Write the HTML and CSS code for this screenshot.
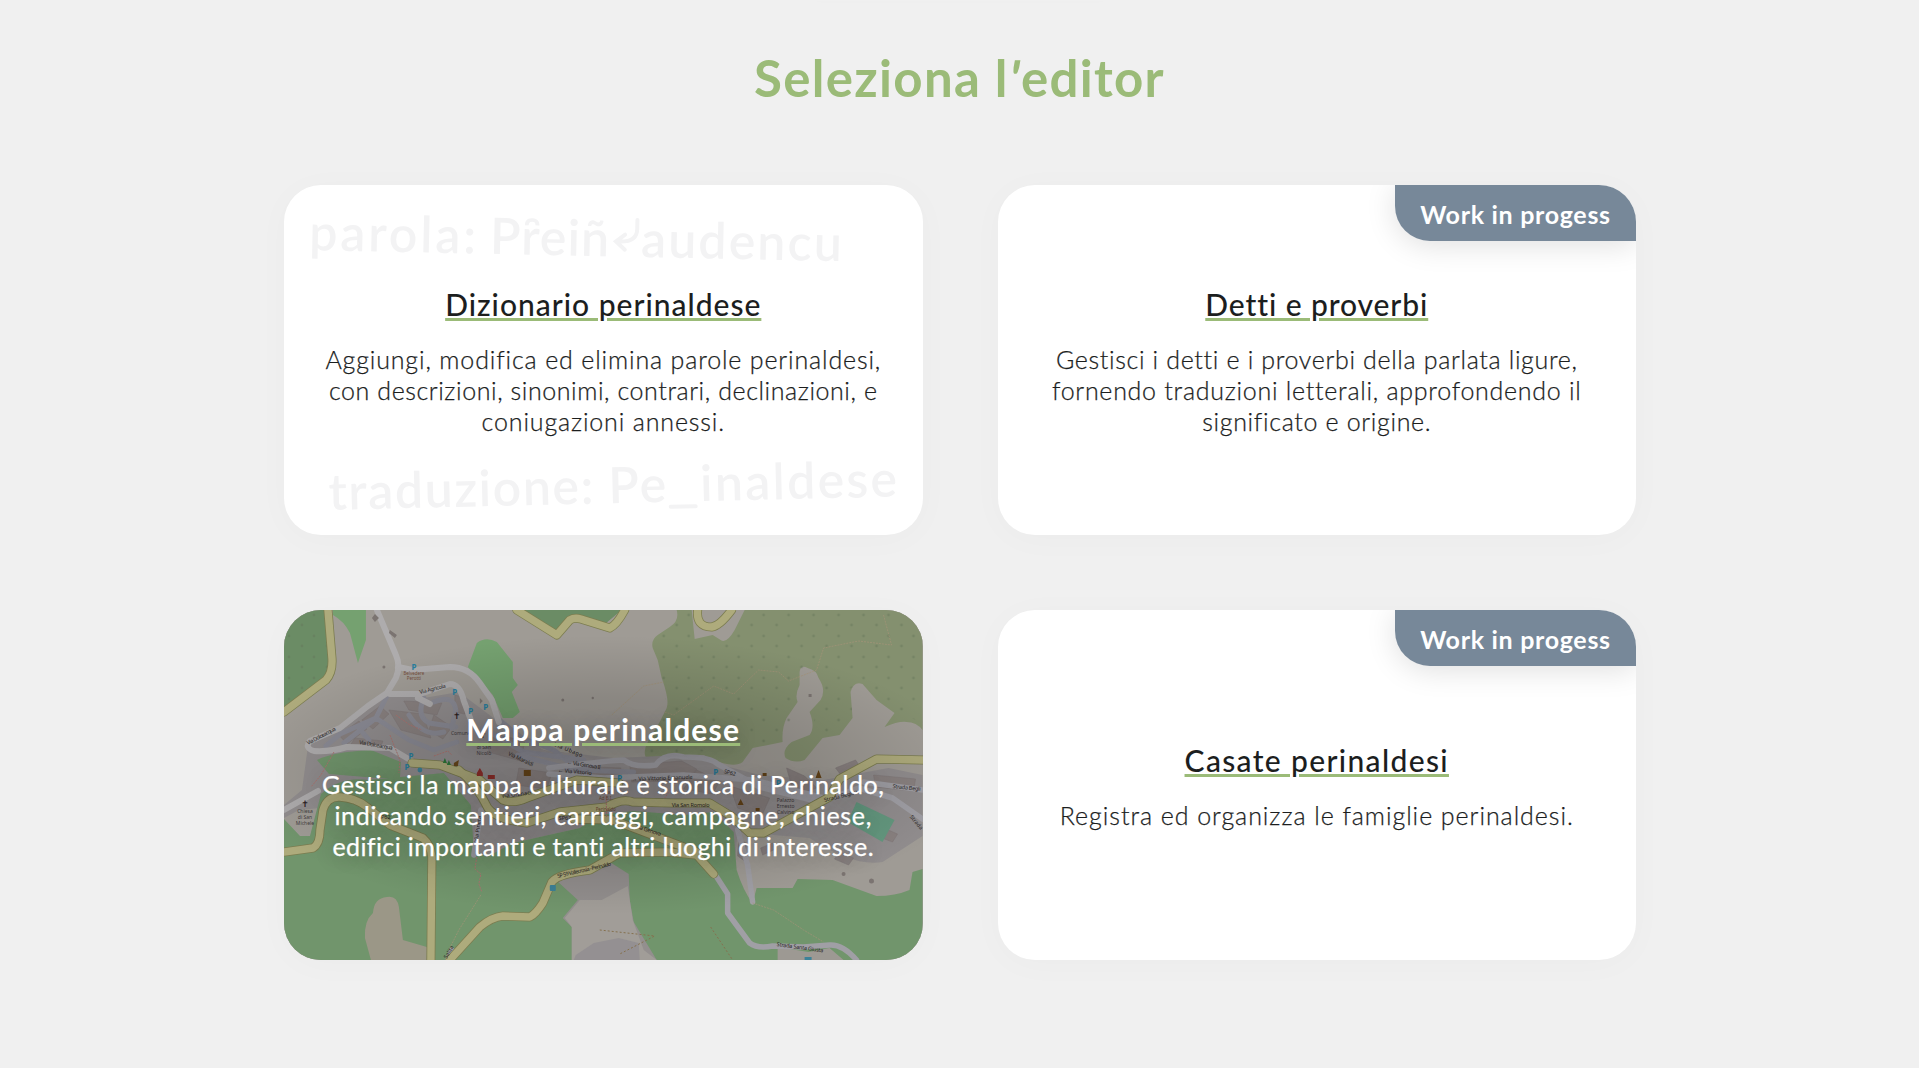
FILE: index.html
```html
<!DOCTYPE html>
<html lang="it">
<head>
<meta charset="utf-8">
<title>Seleziona l'editor</title>
<link rel="stylesheet" href="styles.css">
</head>
<body>
<main class="page">
  <div class="top-edge"></div>
  <h1 class="title">Seleziona l<span class="apostrophe">'</span>editor</h1>
  <section class="grid">
    <a class="card">
      <svg class="backdrop" viewBox="0 0 639 350" aria-hidden="true">
        <g class="ghost" transform="rotate(1.2 27 65)">
          <text x="25" y="65" textLength="167">parola:</text>
          <text x="206" y="65" textLength="119">Pȓeiñ</text>
          <path d="M353 28v9q0 13-17 13M341 43l-9 7 9 8"/>
          <text x="357" y="65" textLength="201">audencu</text>
        </g>
        <g class="ghost" transform="rotate(-1.35 45 324)">
          <text x="45" y="325" textLength="265">traduzione:</text>
          <text x="325" y="325" textLength="58">Pe</text>
          <path class="blank" d="M387 330H412"/>
          <text x="417" y="325" textLength="197">inaldese</text>
        </g>
      </svg>
      <h2 class="name t-diz">Dizionario perinaldese</h2>
      <p class="desc"><span class="w85">Aggiungi, modifica ed elimina parole perinaldesi,</span><span class="w57">con descrizioni, sinonimi, contrari, declinazioni, e</span><span class="w85">coniugazioni annessi.</span></p>
    </a>
    <a class="card">
      <span class="badge">Work in progess</span>
      <h2 class="name t-det">Detti e proverbi</h2>
      <p class="desc"><span class="w66">Gestisci i detti e i proverbi della parlata ligure,</span><span class="w73">fornendo traduzioni letterali, approfondendo il</span><span class="w66">significato e origine.</span></p>
    </a>
    <a class="card map">
      <svg class="backdrop" viewBox="0 0 639 350" preserveAspectRatio="none" aria-hidden="true">
        <defs>
          <pattern id="trees" width="25" height="21" patternUnits="userSpaceOnUse"><circle cx="5" cy="5" r="1.4"/><circle cx="18" cy="15" r="1.4"/></pattern>
          <radialGradient id="shade"><stop offset="0" stop-opacity=".2"/><stop offset=".55" stop-opacity=".13"/><stop offset="1" stop-opacity="0"/></radialGradient>
        </defs>
        <rect width="639" height="350" fill="#9f9b95"/>
        <!-- woods -->
        <path fill="#6b8c65" d="M0 0H42L46 45 45 68 0 102Z"/>
        <path fill="#6b8c65" d="M240 0L273 24 291 7 320 15 338 0Z"/>
        <path fill="#84906f" d="M393 0Q396 11 386 17L374 25Q367 30 369 38L374 50 378 68Q386 90 383 98L376 112 364 132Q357 145 366 152 378 151 389 145H420Q449 160 459 152L469 138 499 132Q498 118 503 108L514 92Q511 85 516 75L516 62Q517 54 524 58 533 60 535 68 543 80 537 90L526 102Q532 117 526 125L508 132Q498 140 502 148 511 154 521 150L539 128 556 125 569 108 567 82Q570 71 579 74L593 90 611 103 601 117Q615 111 623 112 633 112 639 120V0H461L451 20Q443 34 437 30L429 25 411 29 408 0Z"/>
        <path fill="url(#trees)" class="dots" d="M0 0H42L46 45 45 68 0 102ZM393 0L369 38 378 68 383 98 361 145 469 138 499 132 514 92 516 58 535 68 537 90 526 125 556 125 569 108 567 78 579 74 611 103 639 112V0H461L441 32 409 27 408 0Z"/>
        <!-- meadows -->
        <g fill="#75a170">
          <path d="M49 0H82V30L74 53 66 23Q60 11 49 5Z"/>
          <path d="M184 57L193 33Q202 26 213 32L229 52V68L234 75 228 82 236 102 229 108H219L209 85Z"/>
        </g>
        <!-- town -->
        <path fill="#918d8e" d="M24 136L60 118 103 85 140 88 175 82 215 112 260 140 330 148 400 145 476 165 540 170 605 158 639 165V226L599 252Q570 257 526 228L454 222 450 265 430 205 296 218 229 233 203 248 179 242 120 190 15 200 0 208V195L18 180Z"/>
        <g class="blocks"><path d="M55 125l20-14 8 8-20 15zM78 110l18-14 9 8-16 15zM105 100l34 4 8 24-30-8zM120 91l38 2-5 12-28-5zM150 105l18 12-9 12-14-9zM71 128l28 3-3 8-30-3zM171 85l10 3 0 16-10-2zM205 123l36 8-4 20-32-9zM235 158l33 5-5 16-31-4zM290 156l47 2 2 15-42-2zM346 155l52-4 15 8-8 12-57 1zM413 160l23 11-7 13-29-5zM446 176l40 12-8 18-24-8zM503 158l18 8 12 12-22 8zM552 158l20-8 4 6-18 10zM590 165l42 4-2 12-38-4zM455 230l8 3-2 18-7-5zM477 238l12-5 3 6-13 6zM556 242l14 6-5 7-14-6zM600 218l14 6-5 8-13-5zM265 270l25 5 20-6 12 9-20 14-22-6z"/></g>
        <!-- southern slopes -->
        <g fill="#71956c">
          <path d="M33 150Q48 142 87 140L117 152 116 168 93 168 45 164Z"/>
          <path d="M0 209L16 226H26L37 184Q57 166 84 170L160 163 187 195 190 240 203 247 229 233 296 218 316 205 350 201 400 205 430 202 450 222 453 260Q460 282 469 293L473 278H509L514 269 549 270 593 286Q612 286 626 280L629 262 639 259V350H0Z"/>
        </g>
        <path fill="#9b9787" d="M103 287Q113 285 115 297L119 330 143 337Q143 345 147 350H87L81 328Q80 311 89 303 90 288 103 287Z"/>
        <path fill="#938f8e" d="M270 268L326 252 345 264 346 290 350 312 373 350H288V317L279 308 294 290Z"/>
        <path fill="#a19d98" d="M296 290L318 290 344 276 349 310 360 340 373 350H288V317L281 308Z"/>
        <path fill="#949092" d="M292 345L310 333 335 328 355 333 356 350H290Z"/>
        <path fill="#9d9993" d="M494 350V337L525 342 546 338 560 350Z"/>
        <path fill="#64987f" d="M573 192L611 210 599 232 564 212Z"/>
        <!-- lanes -->
        <g class="lane">
          <path d="M103 86L92 108 56 124 42 136M92 108L125 130 150 140 173 132M92 108L60 133M125 105Q140 128 160 122M140 88Q132 106 145 113L172 117M150 92Q170 84 172 100L168 118M199 118L240 142 300 150M75 118L85 130M213 108L238 128 270 140 292 158 316 153M234 145L290 160 350 162"/>
        </g>
        <g class="road-w">
          <path d="M93 0L112 45Q117 56 112 68L103 83 84 96 56 118 26 131Q20 138 30 141 46 142 63 137L106 138 128 151"/>
          <path d="M114 57L129 60 166 57Q185 57 196 73L208 90 215 112"/><path d="M106 84H136L166 74Q176 74 180 91L187 110M134 88l12 6"/>
          <path d="M0 200L34 181"/>
        </g>
        <g class="road-g">
          <path d="M265 158Q330 150 340 150 350 158 372 155 382 142 400 147 427 147 434 154L476 177 536 192 575 178 609 188 639 209"/>
          <path d="M265 164L320 168 400 165 470 170 540 188M580 172L639 180M454 220L464 255 469 292M190 245L197 200"/>
          <path d="M433 267L444 284V303L466 333Q474 339 489 336L520 337 546 335Q559 334 573 350M164 350L168 340"/>
        </g>
        <!-- main roads -->
        <g class="edge"><path d="M44 0L48 48Q49 62 42 70L0 102"/><path d="M233 0L273 25 286 10Q291 7 297 9L326 18Q333 15 341 0"/><path d="M414 0Q412 17 428 17 436 16 448 0"/><path d="M0 242L29 238Q36 234 36 220L39 200Q43 186 56 187 72 188 83 197L106 215 139 228Q147 235 148 247L147 350"/><path d="M166 350L196 317Q208 307 219 306L246 307Q252 304 259 293L268 272Q274 264 306 260L336 243 383 242 413 245 430 264"/><path d="M128 153L156 155 196 170 219 190Q229 194 243 188L293 170 335 173"/><path d="M175 160Q193 175 204 198 213 210 243 213L276 202 323 197Q338 188 349 192L389 193 426 193 449 207 466 223H480L546 187 556 169 593 149 639 150"/><path d="M290 209L329 210 413 242"/></g>
        <g class="fill"><path d="M44 0L48 48Q49 62 42 70L0 102"/><path d="M233 0L273 25 286 10Q291 7 297 9L326 18Q333 15 341 0"/><path d="M414 0Q412 17 428 17 436 16 448 0"/><path d="M0 242L29 238Q36 234 36 220L39 200Q43 186 56 187 72 188 83 197L106 215 139 228Q147 235 148 247L147 350"/><path d="M166 350L196 317Q208 307 219 306L246 307Q252 304 259 293L268 272Q274 264 306 260L336 243 383 242 413 245 430 264"/><path d="M128 153L156 155 196 170 219 190Q229 194 243 188L293 170 335 173"/><path d="M175 160Q193 175 204 198 213 210 243 213L276 202 323 197Q338 188 349 192L389 193 426 193 449 207 466 223H480L546 187 556 169 593 149 639 150"/><path d="M290 209L329 210 413 242"/></g>
        <path class="path-red" d="M50 142L37 165 27 177M106 125L116 150 115 163M112 105L126 115 138 120M150 146l14-5 4 4M193 247l-2 12 6 5-2 10 3 8M322 178l1 30M394 170l-13 18"/>
        <path class="path-tan" d="M381 102L390 105 430 76 450 84 475 60 495 62 505 71 533 60 540 38 575 31 608 35 600 5M328 105L360 76 380 72M197 285L175 320 165 340M469 293L490 300 520 320 540 332"/>
        <path class="track" d="M316 320l55 6-35 18M427 317l22 33M620 290"/>
        <!-- map labels -->
        <g class="labels">
          <text x="136" y="84" textLength="27" transform="rotate(-14 136 84)">Via Agricola</text>
          <text x="24" y="135" textLength="32" transform="rotate(-28 24 135)">Via Dolceacqua</text>
          <text x="75" y="134" textLength="34" transform="rotate(10 75 134)">Via Dolceacqua</text>
          <text x="224" y="145" textLength="27" transform="rotate(25 224 145)">Via Maraldi</text>
          <text x="270" y="136" textLength="30" transform="rotate(22 270 136)">Via Ubago</text>
          <text x="283" y="154" textLength="34" transform="rotate(9 283 154)">← Via Genova II</text>
          <text x="274" y="162" textLength="34" transform="rotate(5 274 162)">← Via Vittorio</text>
          <text x="348" y="171" textLength="61" transform="rotate(-2 348 171)">→ Via Vittorio Emanuele</text>
          <text x="388" y="197" textLength="38">Via San Romolo</text>
          <text x="352" y="218" textLength="26" transform="rotate(18 352 218)">Via Genova</text>
          <text x="274" y="268" textLength="55" transform="rotate(-13 274 268)">SP 59 Vallecrosia - Perinaldo</text>
          <text x="218" y="188" textLength="30" transform="rotate(-7 218 188)">Via Granaci</text>
          <text x="541" y="192" textLength="34" transform="rotate(-14 541 192)">Strada Beglini</text>
          <text x="609" y="178" textLength="28" transform="rotate(6 609 178)">Strada Begli</text>
          <text x="626" y="207" textLength="17" transform="rotate(50 626 207)">Strada</text>
          <text x="493" y="336" textLength="47" transform="rotate(8 493 336)">Strada Santa Giusta</text>
          <text x="194" y="232" textLength="26" transform="rotate(-82 194 232)">Via Pineta</text>
          <text x="163" y="349" textLength="14" transform="rotate(-60 163 349)">Salita</text>
          <text x="440" y="163" textLength="12" transform="rotate(15 440 163)">SP62</text>
          <text x="94" y="209">SP62</text><text x="275" y="210">SP62</text>
          <g class="poi"><text x="130" y="65">Belvedere</text><text x="130" y="70">Perotti</text><text x="322" y="184">Via al</text><text x="322" y="190">Ad B.I.</text><text x="322" y="201">Perinaldo</text></g>
          <g class="mid"><text x="177" y="125">Comune</text><text x="200" y="139">di San</text><text x="200" y="145">Nicolò</text><text x="21" y="203">Chiesa</text><text x="21" y="209">di San</text><text x="21" y="215">Michele</text><text x="502" y="192">Palazzo</text><text x="502" y="198">Ernesto</text><text x="502" y="204">Calvino</text></g>
          <g class="cross"><text x="173" y="109">✝</text><text x="21" y="197">✝</text><text x="199" y="128">✝</text></g>
          <g class="park"><text x="130" y="60">P</text><text x="171" y="85">P</text><text x="187" y="104">P</text><text x="202" y="100">P</text><text x="127" y="149">P</text><text x="123" y="160">P</text><text x="432" y="165">P</text><text x="336" y="171">P</text><text x="495" y="176">P</text></g>
        </g>
        <g fill="#3d8298"><rect x="266" y="275" width="6" height="6" rx="1"/><circle cx="136" cy="160" r="2.4"/><rect x="521" y="347" width="7" height="3"/></g>
        <path fill="#8d2f2b" d="M193 163l3-5 3 5v3h-6zM204 165h7v4h-7z"/>
        <path fill="#67461b" d="M240 160h7v6h-7zM170 153l5-3-1 6h-4zM454 195l3-6 3 6zM533 165l2-5 3 8h-6zM472 198h4v3h-4zM479 163h4v3h-4z"/>
        <path fill="#2c7638" d="M161 148l2 5h-4zM165 150l2 5h-4z"/>
        <g fill="#7b7471"><circle cx="279" cy="90" r="1.5"/><circle cx="309" cy="88" r="1.2"/><circle cx="100" cy="57" r="1.5"/><rect x="525" y="84" width="3" height="3"/><path d="M91 4l4 4-4 4-3-4zM106 20l7 5-2 3-6-5zM196 88l3 3-3 3z"/><circle cx="560" cy="264" r="2"/><circle cx="588" cy="271" r="2.5"/></g>
        <ellipse cx="320" cy="165" rx="370" ry="140" fill="url(#shade)"/>
      </svg>
      <h2 class="name t-map">Mappa perinaldese</h2>
      <p class="desc"><span class="w58">Gestisci la mappa culturale e storica di Perinaldo,</span><span class="w70">indicando sentieri, carruggi, campagne, chiese,</span><span class="w37">edifici importanti e tanti altri luoghi di interesse.</span></p>
    </a>
    <a class="card">
      <span class="badge">Work in progess</span>
      <h2 class="name t-cas">Casate perinaldesi</h2>
      <p class="desc"><span class="w95">Registra ed organizza le famiglie perinaldesi.</span></p>
    </a>
  </section>
</main>
</body>
</html>
```
FILE: styles.css
```css
* { box-sizing: border-box; }
body {
  margin: 0;
  height: 1068px;
  overflow: hidden;
  background: #f0f0f0;
  color: #1c1e1e;
  font-family: Lato, "Open Sans", sans-serif;
  font-variant-ligatures: none;
}
.page { display: flex; flex-direction: column; align-items: center; }
.top-edge { width: 290px; height: 1px; box-shadow: 0 0 5px rgba(0,0,0,.03); }
.title {
  margin: 45px 0 75px;
  font-size: 51px;
  line-height: 64px;
  font-weight: 700;
  letter-spacing: 1.3px;
  color: #9bbb78;
}
.apostrophe { display: inline-block; transform: skewX(-10deg); }
.grid { display: grid; grid-template-columns: 638.5px 638.5px; grid-auto-rows: 350px; gap: 75px; margin-left: 1px; }
.card {
  position: relative;
  display: flex;
  flex-direction: column;
  align-items: center;
  justify-content: center;
  border-radius: 37px;
  background: #fff;
  overflow: hidden;
  box-shadow: 0 4px 36px rgba(0,0,0,.025);
}
.backdrop { position: absolute; inset: 0; width: 100%; height: 100%; }
.ghost text { font-size: 50px; font-weight: 600; fill: #f3f3f4; }
.ghost path { fill: none; stroke: #f3f3f4; stroke-width: 4; stroke-linecap: round; }
.badge {
  position: absolute;
  top: 0;
  right: 0;
  width: 241px;
  height: 56px;
  border-bottom-left-radius: 35px;
  background: #778899;
  color: #fff;
  font-size: 25px;
  line-height: 58px;
  font-weight: 700;
  letter-spacing: .7px;
  text-align: center;
  box-shadow: 0 4px 30px rgba(0,0,0,.13);
}
.name {
  position: relative;
  margin: 0 0 19px;
  font-size: 30px;
  line-height: 37px;
  font-weight: 500;
  text-decoration: underline 3px #9bbb78;
  text-underline-offset: 2px;
}
.t-diz { letter-spacing: 1px; }
.t-det { letter-spacing: .9px; }
.t-cas { letter-spacing: 1.35px; }
.t-map { letter-spacing: 1.2px; font-weight: 700; }
.desc {
  position: relative;
  margin: 0 0 -2px;
  padding-top: 2px;
  font-size: 25px;
  line-height: 31px;
  font-weight: 300;
  text-align: center;
  -webkit-text-stroke: .25px currentColor;
}
.desc span { display: block; white-space: nowrap; }
.w37 { letter-spacing: .371px; }
.w57 { letter-spacing: .574px; }
.w58 { letter-spacing: .583px; }
.w66 { letter-spacing: .66px; }
.w70 { letter-spacing: .698px; }
.w73 { letter-spacing: .73px; }
.w85 { letter-spacing: .85px; }
.w95 { letter-spacing: .951px; }
.map { color: #fff; background: #9f9b95; }
.map .name, .map .desc { text-shadow: 0 2px 20px rgba(0,0,0,.25); }
.map .desc { font-weight: 400; }
#trees circle { fill: #647559; }
.dots { opacity: .45; }
.blocks { fill: #898180; stroke: #827979; stroke-width: .6; }
.lane, .road-w, .road-g, .edge, .fill { fill: none; stroke-linejoin: round; stroke-linecap: round; }
.lane { stroke: #8b8b95; stroke-width: 5; }
.road-w { stroke: #aeacad; stroke-width: 6; }
.road-g { stroke: #a09fa5; stroke-width: 5.5; }
.edge { stroke: #7c7d50; stroke-width: 9; }
.fill { stroke: #aeab7c; stroke-width: 7.4; }
.path-red, .path-tan, .track { fill: none; stroke-width: 1; }
.path-red { stroke: #ac7470; stroke-dasharray: 2 1; }
.path-tan { stroke: #a59478; opacity: .7; stroke-dasharray: 2 1; }
.track { stroke: #85704e; stroke-dasharray: 2 2; }
.labels text { font: 5.5px "Noto Sans", sans-serif; fill: #2b2827; }
.labels .mid text { font-size: 5px; fill: #413b3d; text-anchor: middle; }
.labels .poi text { font-size: 4.5px; fill: #744f3d; text-anchor: middle; }
.labels .cross text { font: 9px "DejaVu Sans", sans-serif; fill: #2b201e; text-anchor: middle; }
.labels .park text { font: 700 8px "Noto Sans", sans-serif; fill: #287f9f; text-anchor: middle; }
```
